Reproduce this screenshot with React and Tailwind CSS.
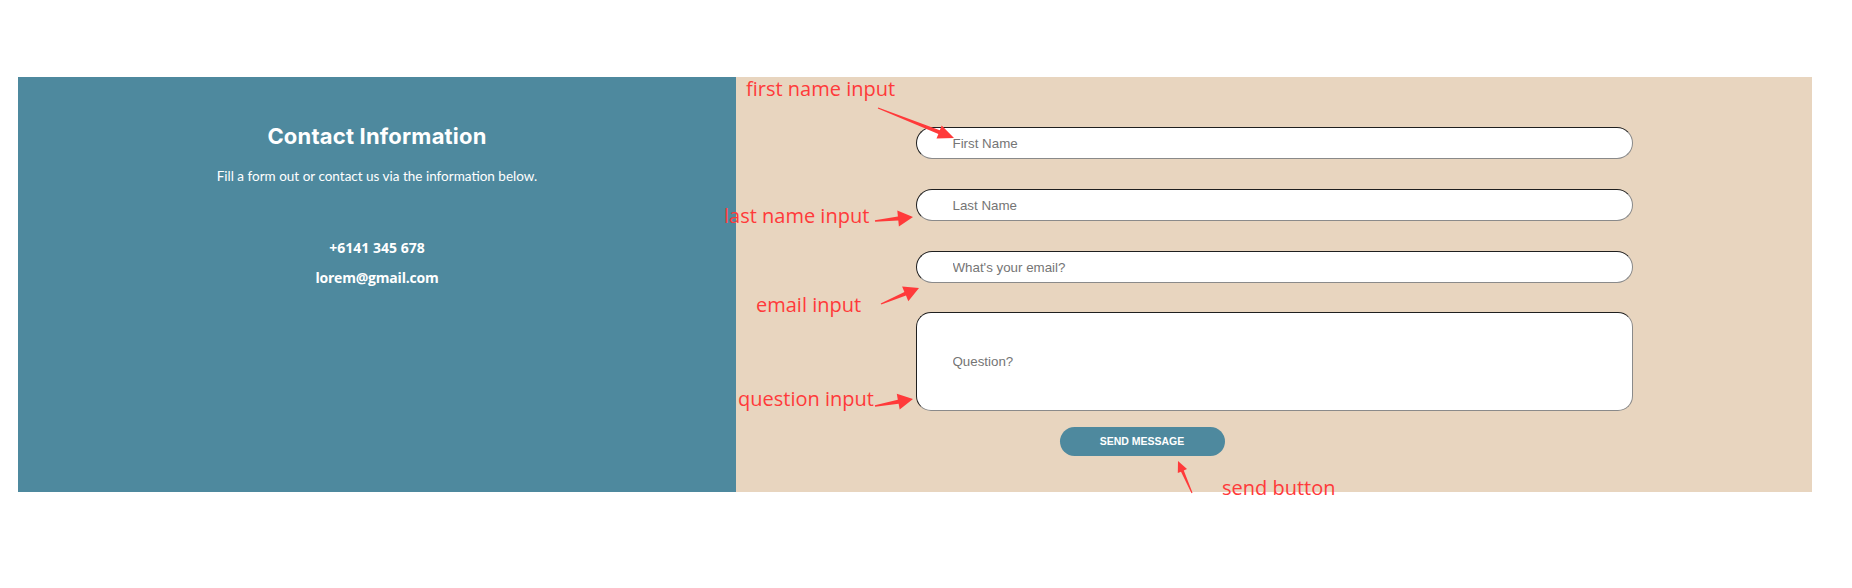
import React from "react";

const inputCls =
  "block w-full h-[32px] rounded-full bg-white border border-t-[#1f1f1f] border-l-[#1f1f1f] border-b-[#8a8a8a] border-r-[#8a8a8a] pl-[36px] pr-4 font-['Liberation_Sans',Arial,sans-serif] text-[13.33px] text-[#333] placeholder:text-[#757575] outline-none";

function Label({ className, children }) {
  return (
    <div
      className={
        "absolute leading-none whitespace-nowrap font-['Open_Sans',sans-serif] text-[20px] text-[#ff3a3a] " +
        className
      }
    >
      {children}
    </div>
  );
}

export default function App() {
  return (
    <div className="relative w-full h-[588px] bg-white overflow-hidden">
      <div className="pt-[77px] pl-[18px]">
        <div className="flex w-[1794px] h-[415px]">
          {/* Left panel */}
          <div className="w-[718px] bg-[#4e899e] flex flex-col items-center pt-[48px] text-white">
            <h2 className="font-['Inter',sans-serif] font-bold text-[22px] leading-[22px] tracking-[0.2px]">
              Contact Information
            </h2>
            <p className="mt-[23px] font-['Lato',sans-serif] text-[13.5px] leading-[13.5px]">
              Fill a form out or contact us via the information below.
            </p>
            <p className="mt-[57px] font-['Open_Sans',sans-serif] font-bold text-[14px] leading-[14px]">
              +6141 345 678
            </p>
            <p className="mt-[16px] font-['Open_Sans',sans-serif] font-bold text-[14px] leading-[14px] tracking-[-0.2px]">
              lorem@gmail.com
            </p>
          </div>

          {/* Right panel */}
          <div className="flex-1 bg-[#e8d5bf] flex flex-col items-center pt-[50px]">
            <form className="w-[717px] flex flex-col" onSubmit={(e) => e.preventDefault()}>
              <input className={inputCls} placeholder="First Name" />
              <input className={inputCls + " mt-[30px]"} placeholder="Last Name" />
              <input className={inputCls + " mt-[30px]"} placeholder="What's your email?" />
              <input
                className="block w-full h-[99px] mt-[29px] rounded-[15px] bg-white border border-t-[#1f1f1f] border-l-[#1f1f1f] border-b-[#8a8a8a] border-r-[#8a8a8a] pl-[36px] pr-4 font-['Liberation_Sans',Arial,sans-serif] text-[13.33px] text-[#333] placeholder:text-[#757575] outline-none"
                placeholder="Question?"
              />
              <button
                type="submit"
                className="mt-[16px] ml-[144px] w-[165px] h-[29px] rounded-full bg-[#4e899e] text-white font-['Liberation_Sans',Arial,sans-serif] font-bold text-[10.5px] leading-none"
              >
                SEND MESSAGE
              </button>
            </form>
          </div>
        </div>
      </div>

      {/* Annotations */}
      <Label className="left-[746px] top-[79px]">first name input</Label>
      <Label className="left-[724px] top-[206px]">last name input</Label>
      <Label className="left-[756px] top-[295px]">email input</Label>
      <Label className="left-[738px] top-[389px]">question input</Label>
      <Label className="left-[1222px] top-[478px]">send button</Label>

      <svg
        className="absolute left-0 top-0 pointer-events-none"
        width="1852"
        height="588"
        viewBox="0 0 1852 588"
      >
        <g fill="#ff3a3a">
          <polygon points="878.2,107.5 939.8,130.2 941.7,125.6 954,138 936.5,138.6 938.4,134.0 877.8,108.5" />
          <polygon points="874.9,220.3 897.9,216.6 897.3,210.6 913,217 898.9,226.6 898.3,220.6 875.1,221.7" />
          <polygon points="880.7,303.4 904.4,292.0 902.1,286.4 919,288 908.3,301.2 906.0,295.6 881.3,304.6" />
          <polygon points="874.9,405.3 897.8,399.7 896.8,393.8 913,399 899.7,409.6 898.6,403.7 875.1,406.7" />
          <polygon points="1191.5,493.2 1181.0,471.7 1177.8,473.1 1178,461 1187.0,469.1 1183.8,470.5 1192.5,492.8" />
        </g>
      </svg>
    </div>
  );
}
